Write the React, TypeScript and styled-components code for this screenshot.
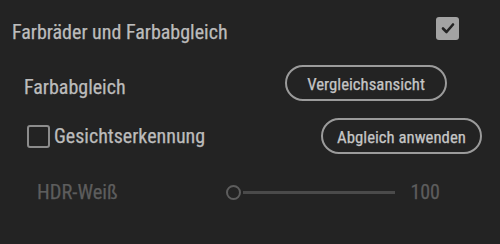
import { FC } from "react";
import styled, { createGlobalStyle } from "styled-components";

const GlobalStyle = createGlobalStyle`
  html, body {
    margin: 0;
    padding: 0;
    background: #232323;
  }
  body {
    font-family: Roboto, "Liberation Sans", sans-serif;
    font-stretch: 87.5%;
    -webkit-font-smoothing: antialiased;
  }
`;

const App: FC = () => {
  return (
    <>
      <GlobalStyle />
      <StyledPanel>
        <StyledHeaderRow>
          <StyledTitle>Farbräder und Farbabgleich</StyledTitle>
          <StyledCheckbox checked>
            <svg width="14" height="12" viewBox="0 0 14 12">
              <path
                d="M2 6.5 L5.5 10 L12 2.5"
                fill="none"
                stroke="#232323"
                strokeWidth="2.6"
                strokeLinecap="round"
                strokeLinejoin="round"
              />
            </svg>
          </StyledCheckbox>
        </StyledHeaderRow>

        <StyledRow $height={54} $left={24} $right={53}>
          <StyledLabel $offset={4}>Farbabgleich</StyledLabel>
          <StyledPillButton $width={162}>Vergleichsansicht</StyledPillButton>
        </StyledRow>

        <StyledRow $height={52} $left={27} $right={18}>
          <StyledCheckLabel>
            <StyledCheckbox />
            <StyledLabel>Gesichtserkennung</StyledLabel>
          </StyledCheckLabel>
          <StyledPillButton $width={161}>Abgleich anwenden</StyledPillButton>
        </StyledRow>

        <StyledRow $height={60} $left={37} $right={60}>
          <StyledDimLabel>HDR-Weiß</StyledDimLabel>
          <StyledSlider>
            <StyledThumb />
            <StyledTrack />
          </StyledSlider>
          <StyledValue>100</StyledValue>
        </StyledRow>
      </StyledPanel>
    </>
  );
};

export default App;

const StyledPanel = styled.div`
  width: 500px;
  height: 244px;
  display: flex;
  flex-direction: column;
  background: #232323;
  overflow: hidden;
`;

const StyledHeaderRow = styled.div`
  height: 56px;
  padding: 0 41px 0 12px;
  display: flex;
  align-items: center;
  justify-content: space-between;
`;

const StyledRow = styled.div<{ $height: number; $left: number; $right: number }>`
  height: ${(p) => p.$height}px;
  padding: 0 ${(p) => p.$right}px 0 ${(p) => p.$left}px;
  display: flex;
  align-items: center;
  justify-content: space-between;
`;

const StyledTitle = styled.div`
  margin-top: 8px;
  font-size: 20px;
  color: #bcbcbc;
  white-space: nowrap;
  -webkit-text-stroke: 0.25px #bcbcbc;
`;

const StyledLabel = styled.div<{ $offset?: number }>`
  margin-top: ${(p) => (p.$offset ?? 0) * 2}px;
  font-size: 20px;
  color: #bcbcbc;
  white-space: nowrap;
  -webkit-text-stroke: 0.25px #bcbcbc;
`;

const StyledCheckLabel = styled.div`
  display: flex;
  align-items: center;
  gap: 4px;
`;

const StyledCheckbox = styled.div<{ checked?: boolean }>`
  box-sizing: border-box;
  width: 23px;
  height: 23px;
  border-radius: 3px;
  display: flex;
  align-items: center;
  justify-content: center;
  background: ${(p) => (p.checked ? "#a3a3a3" : "transparent")};
  border: ${(p) => (p.checked ? "none" : "2.5px solid #8c8c8c")};
`;

const StyledPillButton = styled.div<{ $width: number }>`
  box-sizing: border-box;
  width: ${(p) => p.$width}px;
  height: 36px;
  border: 2px solid #9b9b9b;
  border-radius: 18px;
  display: flex;
  align-items: center;
  justify-content: center;
  padding-top: 2px;
  font-size: 16.8px;
  color: #c6c6c6;
  white-space: nowrap;
  -webkit-text-stroke: 0.25px #c6c6c6;
`;

const StyledDimLabel = styled.div`
  width: 189px;
  font-size: 20.5px;
  color: #5d5d5d;
  white-space: nowrap;
  -webkit-text-stroke: 0.25px #5d5d5d;
`;

const StyledSlider = styled.div`
  flex: 1;
  display: flex;
  align-items: center;
`;

const StyledThumb = styled.div`
  box-sizing: border-box;
  width: 15px;
  height: 15px;
  border-radius: 50%;
  border: 2.5px solid #5d5d5d;
  flex-shrink: 0;
`;

const StyledTrack = styled.div`
  flex: 1;
  height: 3px;
  margin-left: 2px;
  background: #4a4a4a;
`;

const StyledValue = styled.div`
  margin-left: 15px;
  font-size: 20px;
  color: #5d5d5d;
  -webkit-text-stroke: 0.25px #5d5d5d;
`;
